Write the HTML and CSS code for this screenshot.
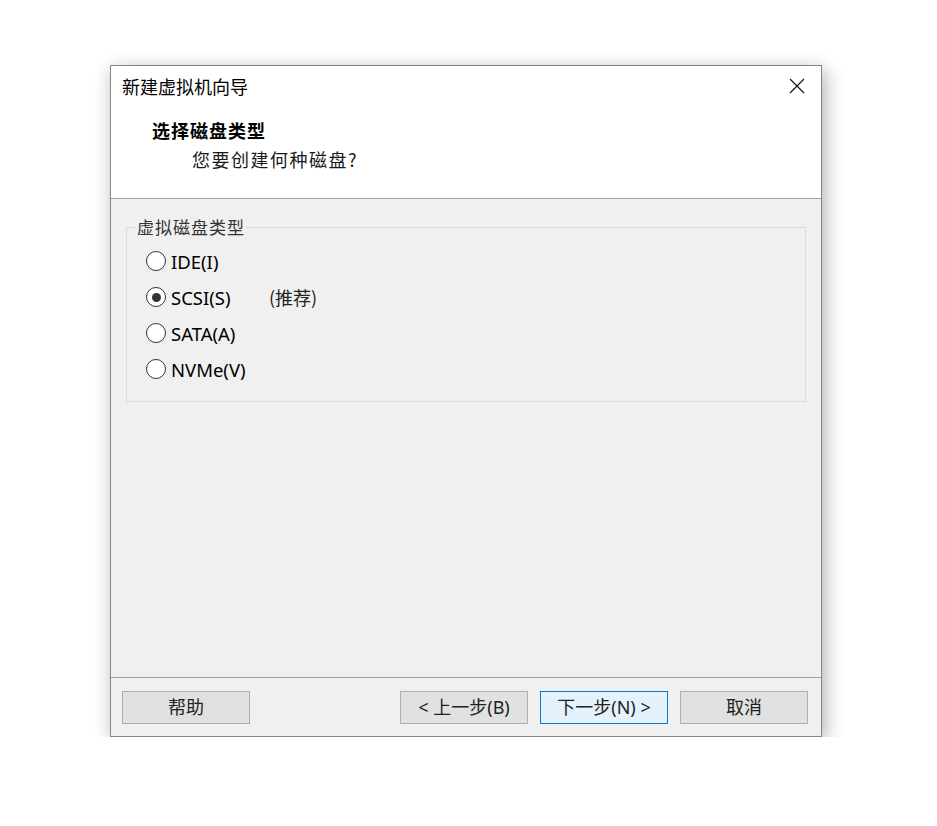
FILE: index.html
```html
<!DOCTYPE html>
<html lang="zh-CN">
<head>
    <meta charset="UTF-8">
    <meta name="viewport" content="width=device-width, initial-scale=1.0">
    <title>新建虚拟机向导</title>
    <link rel="stylesheet" href="styles.css">
</head>
<body>
    <div class="dialog">
        <div class="header">
            <div class="title-row">
                <span class="title">新建虚拟机向导</span>
                <span class="close">
                    <svg width="16" height="16" viewBox="0 0 16 16">
                        <path d="M1 1 L15 15 M15 1 L1 15" stroke="#111" stroke-width="1.2" fill="none"/>
                    </svg>
                </span>
            </div>
            <div class="heading">选择磁盘类型</div>
            <div class="subheading">您要创建何种磁盘?</div>
        </div>
        <div class="content">
            <div class="group">
                <div class="group-title">虚拟磁盘类型</div>
                <div class="options">
                    <label class="option"><span class="radio"></span>IDE(I)</label>
                    <label class="option"><span class="radio checked"></span><span class="option-name">SCSI(S)</span><span class="note">(推荐)</span></label>
                    <label class="option"><span class="radio"></span>SATA(A)</label>
                    <label class="option"><span class="radio"></span>NVMe(V)</label>
                </div>
            </div>
        </div>
        <div class="footer">
            <button class="btn">帮助</button>
            <div class="spacer"></div>
            <button class="btn">&lt; 上一步(B)</button>
            <button class="btn primary">下一步(N) &gt;</button>
            <button class="btn">取消</button>
        </div>
    </div>
</body>
</html>
```

FILE: styles.css
```css
body {
    margin: 0;
    background: #fff;
    font-family: "Noto Sans", "Noto Sans CJK SC", sans-serif;
    color: #111;
}
.dialog {
    width: 710px;
    height: 670px;
    margin: 65px 0 0 110px;
    border: 1px solid #858585;
    background: #f0f0f0;
    display: flex;
    flex-direction: column;
    box-shadow: 3px 5px 18px rgba(0, 0, 0, 0.32);
}
.header {
    height: 132px;
    background: #fff;
    border-bottom: 1px solid #a0a0a0;
    box-sizing: content-box;
}
.title-row {
    display: flex;
    align-items: center;
    justify-content: space-between;
    padding: 7px 16px 0 11px;
    height: 26px;
}
.title {
    font-family: "Noto Sans CJK SC", sans-serif;
    font-size: 18px;
    line-height: 26px;
    color: #000;
}
.close {
    display: flex;
    width: 16px;
    height: 16px;
}
.heading {
    margin: 20px 0 0 41px;
    font-family: "Noto Sans CJK SC", serif;
    font-weight: bold;
    font-size: 18px;
    letter-spacing: 1px;
    line-height: 22px;
    color: #000;
}
.subheading {
    margin: 7px 0 0 81px;
    font-family: "Noto Sans CJK SC", serif;
    font-size: 18px;
    letter-spacing: 1.5px;
    line-height: 22px;
    color: #1a1a1a;
}
.content {
    flex: 1;
    padding-top: 28px;
}
.group {
    margin: 0 15px;
    border: 1px solid #dcdcdc;
    padding: 0 0 14px 19px;
}
.group-title {
    width: fit-content;
    margin: -12px 0 0 -10px;
    padding: 0 1px;
    background: #f0f0f0;
    font-family: "Noto Sans CJK SC", sans-serif;
    font-size: 17px;
    letter-spacing: 1px;
    line-height: 22px;
    color: #333;
}
.options {
    margin-top: 5px;
}
.option {
    display: flex;
    align-items: center;
    height: 36px;
    font-size: 18.5px;
    color: #000;
}
.radio {
    width: 18px;
    height: 18px;
    border: 1px solid #333;
    border-radius: 50%;
    background: #fff;
    margin-right: 5px;
    display: flex;
    align-items: center;
    justify-content: center;
}
.radio.checked::after {
    content: "";
    width: 9px;
    height: 9px;
    border-radius: 50%;
    background: #333;
}
.option-name {
    width: 98px;
}
.note {
    font-family: "Noto Sans CJK SC", sans-serif;
    font-size: 18px;
    color: #222;
}
.footer {
    height: 58px;
    border-top: 1px solid #a0a0a0;
    box-sizing: content-box;
    display: flex;
    align-items: flex-start;
    gap: 12px;
    padding: 0 13px 0 11px;
}
.spacer {
    flex: 1;
}
.btn {
    margin-top: 13px;
    width: 128px;
    height: 33px;
    border: 1px solid #adadad;
    background: #e1e1e1;
    font-family: "Noto Sans", "Noto Sans CJK SC", sans-serif;
    font-size: 18px;
    color: #222;
    padding: 0 0 3px;
}
.btn.primary {
    border-color: #0078d7;
    background: #e5f1fb;
}
```
